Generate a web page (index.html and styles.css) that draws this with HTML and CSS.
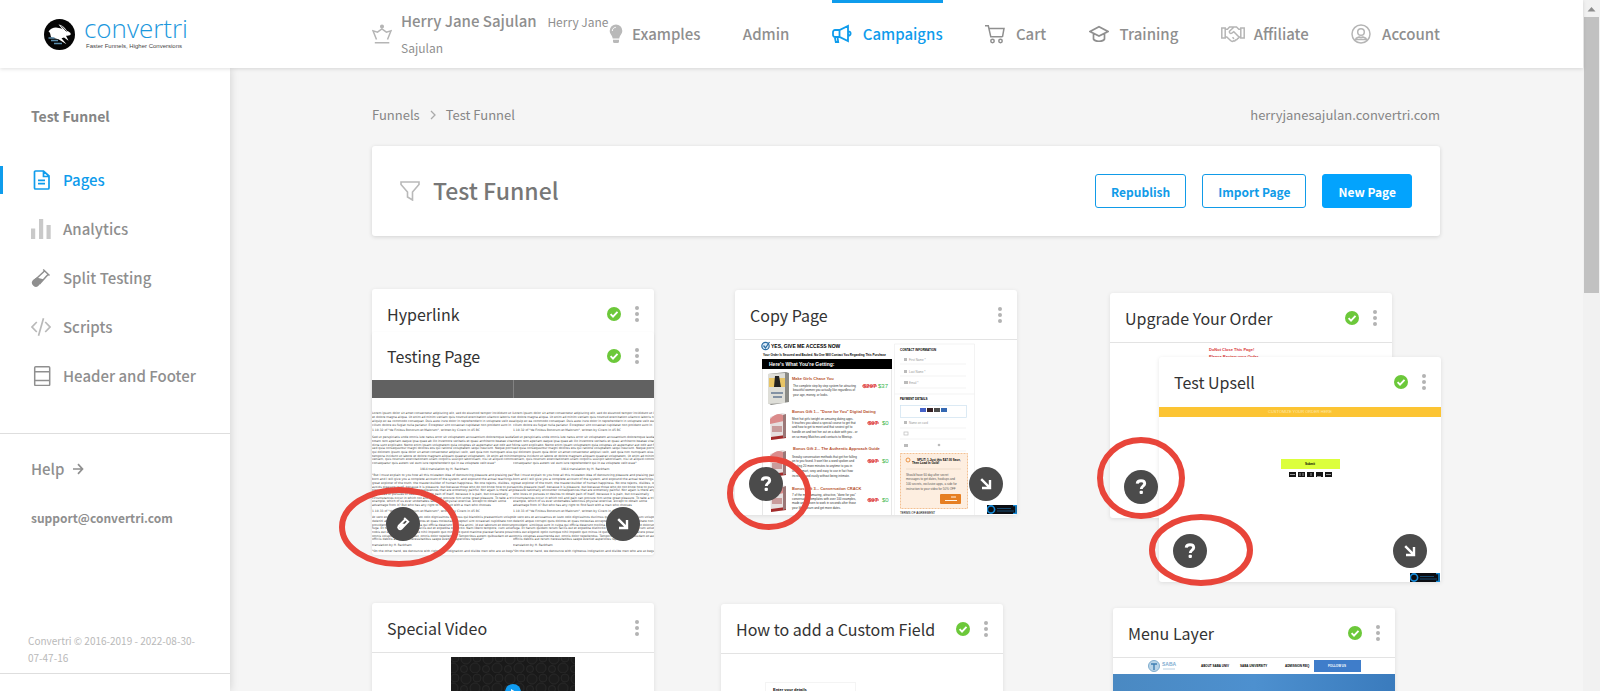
FILE: index.html
```html
<!DOCTYPE html>
<html lang="en">
<head>
<meta charset="utf-8">
<title>Test Funnel - Convertri</title>
<link rel="stylesheet" href="styles.css">
</head>
<body>
<svg class="defs" aria-hidden="true">
  <symbol id="i-check" viewBox="0 0 14 14"><circle cx="7" cy="7" r="7" fill="#6cc83a"/><path d="M3.6 7.2l2.4 2.4 4.5-4.7" fill="none" stroke="#fff" stroke-width="1.9"/></symbol>
  <symbol id="i-dots" viewBox="0 0 4 16"><g fill="#b3b3b3"><circle cx="2" cy="2" r="2"/><circle cx="2" cy="8" r="2"/><circle cx="2" cy="14" r="2"/></g></symbol>
  <symbol id="i-arrow" viewBox="0 0 12 12"><path d="M1.2 1.2l8 8M10 2v8H2" fill="none" stroke="#fff" stroke-width="2.4"/></symbol>
  <symbol id="i-question" viewBox="0 0 12 16"><path d="M2.2 4.6C2.4 2.6 4 1.7 6 1.7c2.200 0 3.700 1.100 3.700 2.900 0 2.600-3.400 2.400-3.400 5.300" fill="none" stroke="#fff" stroke-width="2.900"/><rect x="4.600" y="11.700" width="3.300" height="3.300" rx="1" fill="#fff"/></symbol>
  <symbol id="i-tube" viewBox="0 0 20 20"><path d="M12.200 1.500l6.300 6M13.500 3L2.800 13" fill="none" stroke="currentColor" stroke-width="1.500"/><path d="M17 6.500L8.500 16" fill="none" stroke="currentColor" stroke-width="1.500"/><path d="M5.500 9.500l6.800 1.800-4.300 6a4 4 0 0 1-6-5.300z" fill="currentColor"/></symbol>
  <symbol id="i-badge" viewBox="0 0 30 9"><rect width="30" height="9" fill="#0b0d12"/><circle cx="4" cy="4.500" r="3.600" fill="none" stroke="#178bd8" stroke-width="1.600"/><path d="M29 0v9M26 .5h4M26 8.500h4" stroke="#178bd8" stroke-width="1.500"/><path d="M10 3.500h14M10 6h17" stroke="#174a70" stroke-width="1"/></symbol>
</svg>

<div class="app">
  <header class="topbar">
    <a class="brand" href="#">
      <svg class="brand-mark" viewBox="0 0 31 31" aria-hidden="true"><circle cx="15.500" cy="15.500" r="15.500" fill="#050505"/><path d="M4.500 12.500C7 9 11 7.500 15 9c1.500.3 3 .8 4 1.700L14.500 5.500c3 .2 6 2.300 8.500 6.500 2 .5 4.200 2 3.700 3.500-1.200 1.500-3.200 1-4.700 1.300l2.500 5-4.500-3.300-2.500.8 5 6-8-5-7-1.800C6 16.500 7 14 4.500 12.500z" fill="#fff"/><path d="M17 6.500l5.500 6" stroke="#050505" stroke-width=".8"/><path d="M4.500 19h6M7 21.500h7M10 24.500h8" stroke="#5d8fae" stroke-width="1.300"/></svg>
      <span class="brand-text"><span class="brand-name">convertri</span><span class="brand-tag">Faster Funnels, Higher Conversions</span></span>
    </a>
    <div class="topbar-main">
      <div class="plan">
        <svg class="plan-icon" viewBox="0 0 20 20" fill="none" stroke="#b5b5b5" stroke-width="1.500" aria-hidden="true"><path d="M4.500 15.500L1 6.800l4.500 1.400L9.900 5l4.500 3.200L19 6.800 15.500 15.500M2.800 18.800h14.500"/><circle cx="10" cy="2.500" r="1.300" fill="#b5b5b5"/></svg>
        <p class="plan-text"><strong>Herry Jane Sajulan</strong> <span>Herry Jane Sajulan</span></p>
      </div>
      <nav class="topnav">
        <a href="#"><svg class="bulb" viewBox="0 0 14 20" aria-hidden="true"><path d="M7 .5a6.300 6.300 0 0 0-6.300 6.300c0 3.200 2.700 4.700 3 7.700h6.600c.3-3 3-4.500 3-7.700A6.300 6.300 0 0 0 7 .5zM4 15.700h6v1.800a1.500 1.500 0 0 1-1.500 1.500h-3A1.500 1.500 0 0 1 4 17.500z" fill="#b9b9b9"/><path d="M3.300 7c0-2 1.500-3.500 3.500-3.700" fill="none" stroke="#fff" stroke-width="1"/></svg>Examples</a>
        <a href="#">Admin</a>
        <a href="#" class="active"><svg class="ico" viewBox="0 0 20 20" fill="none" stroke="currentColor" stroke-width="1.800" aria-hidden="true"><path d="M3 6h4.500l8.500-4v15l-8.500-4H3a2 2 0 0 1-2-2V8a2 2 0 0 1 2-2zM7.500 6v7M2.800 13l1 5h2.400L5.500 13M16 7.300c3.500 0 3.500 4.400 0 4.400"/></svg>Campaigns</a>
        <a href="#"><svg class="ico" viewBox="0 0 20 20" fill="none" stroke="currentColor" stroke-width="1.500" aria-hidden="true"><path d="M0 1.800h3.300l2.500 11h11.700M4 4.500h15l-1.500 8.300"/><circle cx="7.500" cy="17" r="1.700"/><circle cx="15.500" cy="17" r="1.700"/></svg>Cart</a>
        <a href="#"><svg class="ico" viewBox="0 0 20 20" fill="none" stroke="currentColor" stroke-width="1.700" aria-hidden="true"><path d="M1 7.500l9-4.800 9 4.800-9 4.500zM4.500 9.500V15c1.500 3 9.500 3 11 0V9.500"/></svg>Training</a>
        <a href="#"><svg class="shake" viewBox="0 0 24 18" fill="none" stroke="#b5b5b5" stroke-width="1.500" aria-hidden="true"><path d="M.8 3h3.400v10H.8zM19.800 3h3.400v10h-3.400zM4.200 4.200h2.300L8.500 2h7l2.300 2.200h2M4.200 12h1.600l4 3.800c.8.800 2 .8 2.500 0 1 .6 2 .1 2.200-.9 1 .2 1.900-.3 2-1.400 1 0 1.700-.7 1.500-1.500h1.800M12.500 2.500L8.500 6.300c-.7 1 .8 2.800 2.300 1.900l2-1.500 5.200 5.300M11.500 12.200l1.500 1.500"/></svg>Affiliate</a>
        <a href="#"><svg class="ico" viewBox="0 0 20 20" fill="none" stroke="#b5b5b5" stroke-width="1.500" aria-hidden="true"><circle cx="10" cy="10" r="9"/><circle cx="10" cy="8" r="3.300"/><path d="M4.500 15.500c.5-2 2.500-2 3.700-2.500 1 .5 2.600.5 3.600 0 1.200.5 3.200.5 3.700 2.500z"/></svg>Account</a>
      </nav>
    </div>
  </header>

  <aside class="sidebar">
    <h2 class="side-title">Test Funnel</h2>
    <nav class="sidenav">
      <a href="#" class="active"><svg viewBox="0 0 20 20" fill="none" stroke="currentColor" stroke-width="1.700" aria-hidden="true"><path d="M4.500 1h8L18 6v12a1 1 0 0 1-1 1H4.500a1 1 0 0 1-1-1V2a1 1 0 0 1 1-1M12.500 1v5.500H18M7 10.300h7M7 13.700h7"/></svg>Pages</a>
      <a href="#"><svg viewBox="0 0 20 20" fill="#c9c9c9" aria-hidden="true"><path d="M0 9.500h4.200V20H0zM8 0h4.200v20H8zM15.500 6h4.200v14h-4.200z"/></svg>Analytics</a>
      <a href="#"><svg viewBox="0 0 20 20" aria-hidden="true"><use href="#i-tube"/></svg>Split Testing</a>
      <a href="#"><svg viewBox="0 0 20 20" fill="none" stroke="#b9b9b9" stroke-width="1.700" aria-hidden="true"><path d="M5.800 5L1 10l4.800 5M14.200 5l4.800 5-4.800 5M12.500 1.200l-5 17.600"/></svg>Scripts</a>
      <a href="#"><svg viewBox="0 0 20 20" fill="none" stroke="currentColor" stroke-width="1.500" aria-hidden="true"><rect x="3.700" y=".8" width="15" height="18.700" rx="1"/><path d="M3.700 5.800h15M3.700 14.500h15"/></svg>Header and Footer</a>
    </nav>
    <div class="side-help">
      <a class="help" href="#">Help <svg viewBox="0 0 12 12" fill="none" stroke="currentColor" stroke-width="1.700" aria-hidden="true"><path d="M1 6h9M6 1.200L10.500 6 6 10.800"/></svg></a>
      <a class="support" href="#">support@convertri.com</a>
    </div>
    <p class="copyright">Convertri © 2016-2019 - 2022-08-30-07-47-16</p>
  </aside>

  <main class="main">
    <div class="crumbs">
      <div class="trail"><a href="#">Funnels</a><svg viewBox="0 0 6 10" fill="none" stroke="#aaa" stroke-width="1.300" aria-hidden="true"><path d="M1 1l4 4-4 4"/></svg><span>Test Funnel</span></div>
      <a href="#">herryjanesajulan.convertri.com</a>
    </div>
    <section class="panel">
      <svg class="funnel" viewBox="0 0 20 20" fill="none" stroke="#b9b9b9" stroke-width="1.600" aria-hidden="true"><path d="M1 1h18v2.500L12.500 11v8L7.500 16v-5L1 3.500z"/></svg>
      <h1>Test Funnel</h1>
      <div class="actions">
        <button type="button" class="btn">Republish</button>
        <button type="button" class="btn">Import Page</button>
        <button type="button" class="btn primary">New Page</button>
      </div>
    </section>

    <section class="canvas">
      <article class="card n-hyperlink">
        <header><h3>Hyperlink</h3><svg class="ok"><use href="#i-check"/></svg><button type="button" class="more" aria-label="Hyperlink menu"><svg><use href="#i-dots"/></svg></button></header>
        <div class="thumb"></div>
      </article>

      <article class="card n-testing">
        <header><h3>Testing Page</h3><svg class="ok"><use href="#i-check"/></svg><button type="button" class="more" aria-label="Testing Page menu"><svg><use href="#i-dots"/></svg></button></header>
        <svg class="thumb" viewBox="0 0 282 175">
          <rect width="282" height="18" y="0" fill="#616161"/><path d="M141.500 0v18" stroke="#999" stroke-width=".6"/>
          <clipPath id="half"><rect width="141" height="175"/></clipPath>
          <g id="column" class="lorem" clip-path="url(#half)">
            <text x="0" y="34">Lorem ipsum dolor sit amet consectetur adipiscing elit, sed do eiusmod tempor incididunt ut labore</text>
            <text x="0" y="38">et dolore magna aliqua. Ut enim ad minim veniam quis nostrud exercitation ullamco laboris nisi ut</text>
            <text x="0" y="42">aliquip ex ea commodo consequat. Duis aute irure dolor in reprehenderit in voluptate velit esse</text>
            <text x="0" y="46">cillum dolore eu fugiat nulla pariatur. Excepteur sint occaecat cupidatat non proident sunt in</text>
            <text x="0" y="51">1.10.32 of "de Finibus Bonorum et Malorum", written by Cicero in 45 BC</text>
            <text x="0" y="58">Sed ut perspiciatis unde omnis iste natus error sit voluptatem accusantium doloremque laudantium</text>
            <text x="0" y="62">totam rem aperiam eaque ipsa quae ab illo inventore veritatis et quasi architecto beatae vitae</text>
            <text x="0" y="66">dicta sunt explicabo. Nemo enim ipsam voluptatem quia voluptas sit aspernatur aut odit aut fugit,</text>
            <text x="0" y="69">sed quia consequuntur magni dolores eos qui ratione voluptatem sequi nesciunt. Neque porro est</text>
            <text x="0" y="73">qui dolorem ipsum quia dolor sit amet consectetur adipisci velit, sed quia non numquam eius modi</text>
            <text x="0" y="77">tempora incidunt ut labore et dolore magnam aliquam quaerat voluptatem. Ut enim ad minima</text>
            <text x="0" y="80">veniam, quis nostrum exercitationem ullam corporis suscipit laboriosam, nisi ut aliquid commodi</text>
            <text x="0" y="84">consequatur quis autem vel eum iure reprehenderit qui in ea voluptate velit esse"</text>
            <text x="48" y="90">1914 translation by H. Rackham</text>
            <text x="0" y="96">"But I must explain to you how all this mistaken idea of denouncing pleasure and praising pain was</text>
            <text x="0" y="100">born and I will give you a complete account of the system, and expound the actual teachings of the</text>
            <text x="0" y="104">great explorer of the truth, the master-builder of human happiness. No one rejects, dislikes, or</text>
            <text x="0" y="108">avoids pleasure itself, because it is pleasure, but because those who do not know how to pursue</text>
            <text x="0" y="111">pleasure rationally encounter consequences that are extremely painful. Nor again is there anyone</text>
            <text x="0" y="115">who loves or pursues or desires to obtain pain of itself, because it is pain, but occasionally</text>
            <text x="0" y="119">circumstances occur in which toil and pain can procure him some great pleasure. To take a trivial</text>
            <text x="0" y="122">example, which of us ever undertakes laborious physical exercise, except to obtain some</text>
            <text x="0" y="126">advantage from it? But who has any right to find fault with a man who chooses</text>
            <text x="0" y="132">1.10.33 of "de Finibus Bonorum et Malorum", written by Cicero in 45 BC</text>
            <text x="0" y="138">At vero eos et accusamus et iusto odio dignissimos ducimus qui blanditiis praesentium voluptatum</text>
            <text x="0" y="142">deleniti atque corrupti quos dolores et quas molestias excepturi sint occaecati cupiditate non</text>
            <text x="0" y="146">provident, similique sunt in culpa qui officia deserunt mollitia animi, id est laborum et dolorum</text>
            <text x="0" y="149">fuga. Et harum quidem rerum facilis est et expedita distinctio. Nam libero tempore, cum soluta</text>
            <text x="0" y="153">nobis est eligendi optio cumque nihil impedit quo minus id quod maxime placeat facere possimus,</text>
            <text x="0" y="157">omnis voluptas assumenda est, omnis dolor repellendus. Temporibus autem quibusdam et aut</text>
            <text x="0" y="160">officiis debitis aut rerum necessitatibus saepe eveniet asperiores repellat"</text>
            <text x="0" y="166">translation by H. Rackham</text>
            <text x="0" y="172">"On the other hand, we denounce with righteous indignation and dislike men who are so beguiled</text>
          </g>
          <use href="#column" x="141"/>
        </svg>
        <button type="button" class="round left" aria-label="Split test"><svg viewBox="0 0 20 20"><path d="M11.500 2.500l6 5.500M13 4L4.500 12.500a2.500 2.500 0 0 0 3.500 3.500L16 7.500" fill="none" stroke="#fff" stroke-width="2.400"/><path d="M8 9l5 1-5 6.500-4.500-3.500z" fill="#fff"/></svg></button>
        <button type="button" class="round right" aria-label="Connect Testing Page"><svg class="arrow"><use href="#i-arrow"/></svg></button>
      </article>

      <article class="card n-copy">
        <header><h3>Copy Page</h3><button type="button" class="more" aria-label="Copy Page menu"><svg><use href="#i-dots"/></svg></button></header>
        <svg class="thumb" viewBox="0 0 282 175">
          <circle cx="30.500" cy="6" r="3.700" fill="#dcebf7" stroke="#2c6da3" stroke-width="1.200"/><path d="M28.500 5.500l2 2.500 4-6" fill="none" stroke="#2c6da3" stroke-width="1.300"/>
          <g class="mini">
            <text class="m5 b" x="36" y="8">YES, GIVE ME ACCESS NOW</text>
            <text class="m3 b" x="28" y="16">Your Order Is Secured and Backed. No One Will Contact You Regarding This Purchase</text>
            <path d="M27.500 19v156M156.500 19v156" stroke="#ddd" stroke-width=".7"/>
            <rect x="27" y="19" width="130" height="10" fill="#000"/>
            <text class="m5 b" x="34" y="26" fill="#fff">Here's What You're Getting:</text>
            <path d="M33 34l18-2 3 1v29l-18 3-3-2z" fill="#8b8b86"/><path d="M33 34l17-1v30l-17 1z" fill="#deded8"/><rect x="34" y="38" width="16" height="9" fill="#e8c566"/><path d="M40 36h4l2 11h-7z" fill="#222"/><path d="M36 53h12M38 57h9" stroke="#667a93" stroke-width="1.500"/>
            <g id="box"><path d="M35 77l12-4 4 1v24l-15 2z" fill="#e6dfdf"/><path d="M35 79q8-8 14-3v5l-14 3z" fill="#db8b8b"/><path d="M37 86h10v6H37z" fill="#c99b9b"/><path d="M36 97l15-2v3l-15 2z" fill="#a32b2b"/><path d="M48 75l3-1v23l-3 1z" fill="#9b7777"/></g>
            <use href="#box" y="37"/><use href="#box" y="72"/>
            <g class="m4 b" fill="#b5502c"><text x="57" y="40">Make Girls Chase You</text><text x="57" y="73">Bonus Gift 1... "Done for You" Digital Dating</text><text x="58" y="110">Bonus Gift 2... The Authentic Approach Guide</text><text x="57" y="150">Bonus Gift 3... Conversation CRACK</text></g>
            <g class="m3" fill="#333"><text x="58" y="47">The complete step by step system for attracting</text><text x="58" y="51">beautiful women you actually like regardless of</text><text x="58" y="56">your age, money, or looks.</text>
              <text x="57" y="80">Meet hot girls tonight on amazing dating apps.</text><text x="57" y="84">It teaches you about a special course to get that</text><text x="57" y="88">and how to get to meet and that sexiest girl to</text><text x="57" y="93">handle on and text her out on a date with you - or</text><text x="57" y="98">on so many Matches and contacts to Meetup.</text>
              <text x="57" y="118">Sneaky conversation methods that get her falling</text><text x="57" y="122">on to you found. It won't be a word spoken and</text><text x="57" y="127">exciting 20 more minutes to anytime to you in</text><text x="57" y="132">under smart, sexy and easy to use in fact how</text><text x="57" y="137">incredibly and easily without being intimate.</text>
              <text x="57" y="156">7 of the most amazing, attractive, "done for you"</text><text x="57" y="160">conversation templates with over 100 examples,</text><text x="57" y="164">made and proven to work in seconds after those</text><text x="57" y="169">your life to learn and get more dates.</text></g>
            <g class="m6 b" fill="#dd3a3a"><text x="128" y="48">$297</text><text x="133" y="85">$97</text><text x="133" y="123">$97</text><text x="133" y="162">$97</text></g>
            <path d="M127 46h15M132 83h12M132 121h12M132 160h12" stroke="#dd3a3a"/>
            <g class="m6" fill="#38b54a"><text x="143" y="48">$37</text><text x="147" y="85">$0</text><text x="147" y="123">$0</text><text x="147" y="162">$0</text></g>
            <path d="M159.500 4h80M159.500 4v171M239.500 4v171M159.500 54h80M165 24h66M165 36h66M165 48h66M165 88h66M165 99h66M165 111h66" stroke="#eee" stroke-width=".7" fill="none"/>
            <text class="m3 b" x="165" y="11">CONTACT INFORMATION</text><text class="m3 b" x="165" y="60">PAYMENT DETAILS</text>
            <g class="m3" fill="#999"><text x="174" y="21">First Name *</text><text x="174" y="33">Last Name *</text><text x="174" y="44">Email *</text><text x="174" y="84">Name on card</text></g>
            <g fill="#bbb"><rect x="169" y="18" width="3" height="3"/><rect x="169" y="30" width="3" height="3"/><rect x="169" y="41" width="4" height="3"/><rect x="169" y="81" width="3" height="3"/><rect x="169" y="104" width="4" height="3"/><circle cx="204" cy="105" r="1.300"/></g><rect x="169" y="92" width="4" height="3" fill="none" stroke="#bbb" stroke-width=".7"/>
            <rect x="165.500" y="65.500" width="66" height="12" fill="none" stroke="#cde2f0" stroke-width=".7"/>
            <rect x="185" y="68" width="6" height="4" fill="#4763c9"/><rect x="192" y="68" width="6" height="4" fill="#372226"/><rect x="199" y="68" width="6" height="4" fill="#4b4b4b"/><rect x="206" y="68" width="6" height="4" fill="#3468b2"/>
            <rect x="165.500" y="113.500" width="67" height="55" fill="#fdeee0" stroke="#f0b27a" stroke-width=".8" stroke-dasharray="2 1"/>
            <circle cx="173" cy="120" r="2" fill="none" stroke="#e67f22" stroke-width=".8"/>
            <text class="m3 b" x="182" y="121">SPLIT: 1-Just this $47.00 Save,</text><text class="m3 b" x="177" y="124">Then Load In Gold!</text><path d="M171 129h55" stroke="#e5d0bd" stroke-width=".6"/>
            <g class="m3" fill="#555"><text x="171" y="136">Should have 60 day after secret</text><text x="171" y="140">messages to get dates, hookups and</text><text x="171" y="145">100 secrets, exclusive apps, a side for</text><text x="171" y="150">instruction to your video for 50% OFF</text></g>
            <rect x="205" y="154" width="21" height="10" rx="1" fill="#e67f22"/><path d="M216 157h5M210 160.500h12" stroke="#fff3e5" stroke-width="1"/>
            <text class="m3" x="165" y="174">TERMS OF AGREEMENT</text>
          </g>
          <use href="#i-badge" x="252" y="165" width="30" height="9"/>
        </svg>
        <button type="button" class="round left" aria-label="Copy Page help"><svg class="q"><use href="#i-question"/></svg></button>
        <button type="button" class="round right" aria-label="Connect Copy Page"><svg class="arrow"><use href="#i-arrow"/></svg></button>
      </article>

      <article class="card n-upgrade">
        <header><h3>Upgrade Your Order</h3><svg class="ok"><use href="#i-check"/></svg><button type="button" class="more" aria-label="Upgrade Your Order menu"><svg><use href="#i-dots"/></svg></button></header>
        <svg class="thumb" viewBox="0 0 282 175"><g class="mini b m4" fill="#d93636"><text x="99" y="8">DoNot Close This Page!</text><text x="99" y="15">Please Review your Order</text></g></svg>
        <button type="button" class="round left" aria-label="Upgrade Your Order help"><svg class="q"><use href="#i-question"/></svg></button>
      </article>

      <article class="card n-upsell">
        <header><h3>Test Upsell</h3><svg class="ok"><use href="#i-check"/></svg><button type="button" class="more" aria-label="Test Upsell menu"><svg><use href="#i-dots"/></svg></button></header>
        <svg class="thumb" viewBox="0 0 282 175">
          <rect width="282" height="10" fill="#fcc433"/><text class="mini m4" x="141" y="6" text-anchor="middle" fill="#fde9ae">CUSTOMIZE YOUR ORDER HERE</text>
          <rect x="122" y="52" width="59" height="10" fill="#dcff3d"/><text class="mini m3 b" x="151" y="58" text-anchor="middle">Submit</text>
          <path d="M130 65h7v5h-7zM139 65h7v5h-7zM148 65h7v5h-7zM157 65h7v5h-7zM166 65h7v5h-7z" fill="#151515"/><path d="M131 67.500h5M141 66v3M144 66v3M152 66v3M158 69.500h4M167 67.500h5" stroke="#999" stroke-width="1"/>
          <use href="#i-badge" x="251" y="166" width="30" height="9"/>
        </svg>
        <button type="button" class="round left" aria-label="Test Upsell help"><svg class="q"><use href="#i-question"/></svg></button>
        <button type="button" class="round right" aria-label="Connect Test Upsell"><svg class="arrow"><use href="#i-arrow"/></svg></button>
      </article>

      <article class="card n-video">
        <header><h3>Special Video</h3><button type="button" class="more" aria-label="Special Video menu"><svg><use href="#i-dots"/></svg></button></header>
        <svg class="thumb" viewBox="0 0 282 175">
          <defs><pattern id="cells" width="22" height="20" patternUnits="userSpaceOnUse"><g fill="#1c1c1c" stroke="#2a2a2a" stroke-width=".8"><circle cx="6" cy="6" r="5"/><circle cx="17" cy="5" r="4"/><circle cx="15" cy="15" r="5"/><circle cx="4" cy="16" r="3.500"/></g></pattern></defs>
          <rect x="79" y="4" width="124" height="70" fill="#191919"/><rect x="79" y="4" width="124" height="70" fill="url(#cells)"/>
          <circle cx="141" cy="39" r="8" fill="#109cf1"/><path d="M139 36l5 3-5 3z" fill="#fff"/>
        </svg>
      </article>

      <article class="card n-custom">
        <header><h3>How to add a Custom Field</h3><svg class="ok"><use href="#i-check"/></svg><button type="button" class="more" aria-label="How to add a Custom Field menu"><svg><use href="#i-dots"/></svg></button></header>
        <svg class="thumb" viewBox="0 0 282 175"><rect x="44.500" y="28.500" width="90" height="60" fill="#fff" stroke="#f4f4f4"/><text class="mini m4 b" x="52" y="37">Enter your details</text></svg>
      </article>

      <article class="card n-menu">
        <header><h3>Menu Layer</h3><svg class="ok"><use href="#i-check"/></svg><button type="button" class="more" aria-label="Menu Layer menu"><svg><use href="#i-dots"/></svg></button></header>
        <svg class="thumb" viewBox="0 0 282 175">
          <defs><linearGradient id="sky"><stop offset="0" stop-color="#4a89c2"/><stop offset=".5" stop-color="#4d90cf"/><stop offset="1" stop-color="#3a7bbd"/></linearGradient></defs>
          <circle cx="41" cy="8" r="5.500" fill="#b8d4e8" stroke="#7fadcf"/><path d="M38 6h6M41 6v6" stroke="#3f7fb2" stroke-width="1.400"/>
          <text class="mini m5 b" x="49" y="8" fill="#7fadd0">SABA</text><path d="M50 11h12" stroke="#b9d0e2"/>
          <g class="mini m3 b"><text x="88" y="9">ABOUT SABA UNIV</text><text x="127" y="9">SABA UNIVERSITY</text><text x="172" y="9">ADMISSION REQ</text></g>
          <rect x="201" y="2" width="47" height="12" fill="#3f7dca"/><text class="mini m3 b" x="224" y="9" text-anchor="middle" fill="#fff">FOLLOW US</text>
          <rect y="16" width="282" height="159" fill="url(#sky)"/>
        </svg>
      </article>

      <svg class="mark m-testing" aria-hidden="true"><ellipse cx="50%" cy="50%" rx="57" ry="37"/></svg>
      <svg class="mark m-copy" aria-hidden="true"><ellipse cx="50%" cy="50%" rx="39" ry="34"/></svg>
      <svg class="mark m-upgrade" aria-hidden="true"><ellipse cx="50%" cy="50%" rx="41" ry="38"/></svg>
      <svg class="mark m-upsell" aria-hidden="true"><ellipse cx="50%" cy="50%" rx="49" ry="33"/></svg>
    </section>
  </main>

  <div class="scrollbar" aria-hidden="true"><svg viewBox="0 0 17 17"><path d="M4.500 11.500h8L8.500 7z" fill="#8c8c8c"/></svg><div class="scroll-thumb"></div></div>
</div>
</body>
</html>
```

FILE: styles.css
```css
* { box-sizing: border-box; }
body {
  margin: 0;
  overflow: hidden;
  background: #f5f5f5;
  color: #8f8f8f;
  font-family: "Noto Sans CJK SC", "Noto Sans", sans-serif;
  font-size: 15px;
  line-height: 24px;
}
a { color: inherit; text-decoration: none; }
h1, h2, h3, p { margin: 0; }
button { font-family: inherit; cursor: pointer; }
.defs { display: none; }

.app {
  display: grid;
  grid-template-columns: 230px 1fr 17px;
  grid-template-rows: 68px minmax(0, 1fr);
  height: 100vh;
  overflow: hidden;
}

/* Top bar */
.topbar {
  grid-column: 1 / 3;
  display: flex;
  background: #fff;
  box-shadow: 0 1px 4px rgba(0, 0, 0, 0.13);
  z-index: 3;
}
.brand { flex: 0 0 230px; display: flex; align-items: center; padding-left: 44px; gap: 9px; }
.brand-mark { width: 31px; height: 31px; }
.brand-text { display: flex; flex-direction: column; padding-bottom: 4px; }
.brand-name { color: #1b98dd; font: 300 26px/28px "Open Sans", sans-serif; }
.brand-tag { color: #444; font: 6px/8px "Liberation Sans", sans-serif; white-space: nowrap; padding-left: 2px; }
.topbar-main { flex: 1; display: flex; padding: 0 143px 0 142px; }
.plan { flex: 0 0 237px; display: flex; align-items: center; gap: 9px; }
.plan-icon { flex: none; width: 20px; height: 20px; }
.plan-text { font-size: 12px; line-height: 26px; }
.plan-text strong { font-size: 15px; font-weight: 500; margin-right: 8px; }
.topnav { flex: 1; display: flex; justify-content: space-between; font-weight: 500; }
.topnav a { display: flex; align-items: center; padding-bottom: 3px; border-top: 3px solid transparent; white-space: nowrap; }
.topnav .active { color: #0f9cec; border-top-color: #0f9cec; }
.ico { width: 20px; height: 20px; margin-right: 11px; }
.bulb { width: 14px; height: 20px; margin-right: 9px; }
.shake { width: 24px; height: 18px; margin-right: 9px; }

/* Sidebar */
.sidebar {
  display: flex;
  flex-direction: column;
  background: #fff;
  box-shadow: 1px 0 8px rgba(0, 0, 0, 0.13);
  z-index: 2;
}
.side-title { padding: 36px 0 0 31px; font-size: 14px; line-height: 24px; font-weight: 700; color: #858585; }
.sidenav { display: flex; flex-direction: column; gap: 21px; padding: 38px 0 43px; font-weight: 500; border-bottom: 1px solid #dedede; }
.sidenav a { display: flex; align-items: center; gap: 12px; height: 28px; padding-left: 28px; border-left: 3px solid transparent; white-space: nowrap; }
.sidenav a.active { color: #0f9cec; border-left-color: #0f9cec; }
.sidenav svg { width: 20px; height: 20px; }
.side-help { display: flex; flex-direction: column; gap: 25px; padding: 23px 0 0 31px; font-weight: 500; }
.help { display: flex; align-items: center; gap: 7px; }
.help svg { width: 12px; height: 12px; }
.support { font-size: 12px; font-weight: 700; }
.copyright { margin: auto 0 17px; padding: 0 28px 7px; border-bottom: 1px solid #dedede; font-size: 10px; line-height: 17px; color: #b9b9b9; }

/* Content */
.main { display: flex; flex-direction: column; min-width: 0; padding: 35px 143px 0 142px; overflow: hidden; }
.crumbs { display: flex; justify-content: space-between; font-size: 13px; line-height: 24px; color: #868686; }
.trail { display: flex; align-items: center; gap: 10px; }
.trail svg { width: 6px; height: 10px; }
.panel {
  display: flex;
  align-items: center;
  height: 90px;
  margin-top: 19px;
  padding: 0 28px;
  background: #fff;
  border-radius: 3px;
  box-shadow: 0 1px 4px rgba(0, 0, 0, 0.14);
}
.funnel { width: 20px; height: 20px; margin-right: 13px; }
.panel h1 { font-size: 23px; line-height: 36px; padding-bottom: 3px; font-weight: 500; color: #777; }
.actions { display: flex; gap: 16px; margin-left: auto; }
.btn { height: 34px; padding: 0 15px; border: 1px solid #119be8; border-radius: 3px; background: #fff; color: #119be8; font-size: 12px; font-weight: 700; }
.btn.primary { background: #03a3fd; border-color: #03a3fd; color: #fff; }

/* Funnel canvas */
.canvas { position: relative; flex: 1; }
.card {
  position: absolute;
  width: 282px;
  background: #fff;
  border-radius: 3px;
  box-shadow: 0 1px 4px rgba(0, 0, 0, 0.1);
}
.card header { display: flex; align-items: center; height: 50px; padding: 0 15px; border-bottom: 1px solid #e3e3e3; }
.card h3 { flex: 1; font-size: 16px; line-height: 26px; font-weight: 400; color: #333; white-space: nowrap; }
.ok { width: 14px; height: 14px; }
.more { width: 4px; height: 16px; margin-left: 14px; padding: 0; border: 0; background: none; }
.more svg { display: block; width: 4px; height: 16px; }
.thumb { display: block; width: 100%; height: 175px; }
.n-hyperlink { left: 0; top: 53px; }
.n-testing { left: 0; top: 96px; box-shadow: 0 1px 3px rgba(0, 0, 0, 0.08); }
.n-hyperlink header, .n-testing header, .n-upsell header { border-bottom-color: #fff; }
.n-testing header { height: 48px; }
.n-copy { left: 363px; top: 54px; }
.n-upgrade { left: 738px; top: 57px; }
.n-upsell { left: 787px; top: 121px; }
.n-video { left: 0; top: 367px; }
.n-custom { left: 349px; top: 368px; }
.n-menu { left: 741px; top: 372px; }
.round {
  position: absolute;
  bottom: 14px;
  display: grid;
  place-items: center;
  width: 34px;
  height: 34px;
  padding: 0;
  border: 0;
  border-radius: 50%;
  background: #4b4b4b;
}
.round svg { width: 16px; height: 16px; }
.round .arrow { width: 12px; height: 12px; }
.round .q { width: 12px; height: 16px; }
.left { left: 14px; }
.right { right: 14px; }
.lorem { font: 3px "DejaVu Sans", sans-serif; fill: #444; }
.mini { font-family: "Liberation Sans", sans-serif; }
.m3 { font-size: 3px; }
.m4 { font-size: 4px; }
.m5 { font-size: 5px; }
.m6 { font-size: 6px; }
.b { font-weight: 700; }

/* Hand-drawn highlights over the cards */
.mark { position: absolute; fill: none; stroke: #e8453a; stroke-width: 6px; pointer-events: none; }
.m-testing { left: -33px; top: 251px; width: 120px; height: 80px; }
.m-copy { left: 355px; top: 220px; width: 84px; height: 74px; }
.m-upgrade { left: 725px; top: 201px; width: 88px; height: 82px; }
.m-upsell { left: 777px; top: 278px; width: 104px; height: 72px; }

/* Scrollbar */
.scrollbar { grid-column: 3; grid-row: 1 / 3; background: #f1f1f1; }
.scrollbar svg { display: block; width: 17px; height: 17px; }
.scroll-thumb { height: 40vh; margin: 0 1px; background: #c1c1c1; }
```
